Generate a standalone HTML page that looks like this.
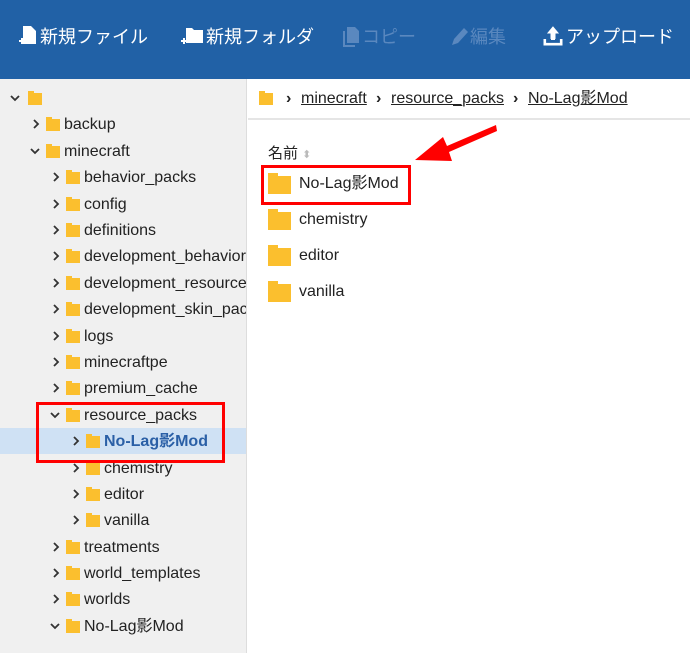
<!DOCTYPE html><html><head><meta charset="utf-8"><style>
*{margin:0;padding:0;box-sizing:border-box}
body{width:690px;height:653px;overflow:hidden;background:#fff;font-family:"Liberation Sans","Noto Sans CJK JP",sans-serif;color:#222;position:relative}
.hdr{position:absolute;left:0;top:0;width:690px;height:79px;background:#2161a6}
.hb{position:absolute;top:25px;color:#fff;font-size:18px;line-height:24px;white-space:nowrap}
.hb svg{vertical-align:-4px;margin-right:2px}
.hb.dis{color:#5a88bf}
.side{position:absolute;left:0;top:79px;width:247px;height:574px;background:#f0f0f0;border-right:1px solid #ddd;overflow:hidden}
.r{position:absolute;left:0;width:247px;height:26px;font-size:16px;line-height:27px;white-space:nowrap}
.r svg{position:absolute;top:8px}
.f{position:absolute;top:8px;width:14px;height:12px;background:#fbbf2e}
.f:before{content:"";position:absolute;left:0;top:-2px;width:6px;height:3px;background:#fbbf2e}
.r .t{position:absolute;top:0}
.crumb{position:absolute;left:248px;top:79px;width:442px;height:41px;border-bottom:2px solid #e5e5e5;font-size:16px;line-height:40px}
.crumb span{position:absolute;top:0;text-decoration:underline;color:#222}
.crumb b{position:absolute;top:0;font-weight:bold}
.li{position:absolute;left:268px;font-size:16px;line-height:20px}
.big{position:absolute;width:23px;height:18px;background:#fbbf2e;left:268px}
.big:before{content:"";position:absolute;left:0;top:-3px;width:10px;height:4px;background:#fbbf2e}
</style></head><body>
<svg width="0" height="0" style="position:absolute"><defs>
<symbol id="cr" viewBox="0 0 10 10"><path d="M3 1 L7 5 L3 9" fill="none" stroke="#333" stroke-width="1.8"/></symbol>
<symbol id="cd" viewBox="0 0 10 10"><path d="M1 3 L5 7 L9 3" fill="none" stroke="#333" stroke-width="1.8"/></symbol>
</defs></svg>
<div class="hdr">
<div class="hb" style="left:18px"><svg width="20" height="22" viewBox="0 0 20 22"><path d="M5 1h8l5 5v13H5z" fill="#fff"/><path d="M1 16h6M4 13v6" stroke="#fff" stroke-width="2"/></svg>新規ファイル</div>
<div class="hb" style="left:180px"><svg width="24" height="22" viewBox="0 0 24 22"><path d="M6 3h6l2 2h9v13H6z" fill="#fff"/><path d="M1 16h6M4 13v6" stroke="#fff" stroke-width="2"/></svg>新規フォルダ</div>
<div class="hb dis" style="left:342px"><svg width="18" height="22" viewBox="0 0 18 22"><path d="M5 2h8l4 4v12H5z" fill="#5a88bf"/><path d="M2 6v15h11" fill="none" stroke="#5a88bf" stroke-width="2"/></svg>コピー</div>
<div class="hb dis" style="left:450px"><svg width="18" height="22" viewBox="0 0 18 22"><path d="M2 20l2-6 10-11 4 4-10 11z" fill="#5a88bf"/></svg>編集</div>
<div class="hb" style="left:542px"><svg width="22" height="22" viewBox="0 0 22 22"><path d="M11 2l-5 6h3v6h4V8h3z M2 14v6h18v-6" fill="#fff" stroke="#fff" stroke-width="1"/><path d="M3 14v5h16v-5" fill="#2161a6" stroke="#fff" stroke-width="2.2"/><path d="M11 2l-5 6h3v7h4V8h3z" fill="#fff"/></svg>アップロード</div>
</div>
<div class="side">
<div class="r" style="top:6px"><svg style="left:10px" width="10" height="10"><use href="#cd"/></svg><div class="f" style="left:28px"></div></div>
<div class="r" style="top:32px"><svg style="left:31px" width="10" height="10"><use href="#cr"/></svg><div class="f" style="left:46px"></div><span class="t" style="left:64px">backup</span></div>
<div class="r" style="top:59px"><svg style="left:30px" width="10" height="10"><use href="#cd"/></svg><div class="f" style="left:46px"></div><span class="t" style="left:64px">minecraft</span></div>
<div class="r" style="top:85px"><svg style="left:51px" width="10" height="10"><use href="#cr"/></svg><div class="f" style="left:66px"></div><span class="t" style="left:84px">behavior_packs</span></div>
<div class="r" style="top:112px"><svg style="left:51px" width="10" height="10"><use href="#cr"/></svg><div class="f" style="left:66px"></div><span class="t" style="left:84px">config</span></div>
<div class="r" style="top:138px"><svg style="left:51px" width="10" height="10"><use href="#cr"/></svg><div class="f" style="left:66px"></div><span class="t" style="left:84px">definitions</span></div>
<div class="r" style="top:164px"><svg style="left:51px" width="10" height="10"><use href="#cr"/></svg><div class="f" style="left:66px"></div><span class="t" style="left:84px">development_behavior</span></div>
<div class="r" style="top:191px"><svg style="left:51px" width="10" height="10"><use href="#cr"/></svg><div class="f" style="left:66px"></div><span class="t" style="left:84px">development_resource</span></div>
<div class="r" style="top:217px"><svg style="left:51px" width="10" height="10"><use href="#cr"/></svg><div class="f" style="left:66px"></div><span class="t" style="left:84px">development_skin_pac</span></div>
<div class="r" style="top:244px"><svg style="left:51px" width="10" height="10"><use href="#cr"/></svg><div class="f" style="left:66px"></div><span class="t" style="left:84px">logs</span></div>
<div class="r" style="top:270px"><svg style="left:51px" width="10" height="10"><use href="#cr"/></svg><div class="f" style="left:66px"></div><span class="t" style="left:84px">minecraftpe</span></div>
<div class="r" style="top:296px"><svg style="left:51px" width="10" height="10"><use href="#cr"/></svg><div class="f" style="left:66px"></div><span class="t" style="left:84px">premium_cache</span></div>
<div class="r" style="top:323px"><svg style="left:50px" width="10" height="10"><use href="#cd"/></svg><div class="f" style="left:66px"></div><span class="t" style="left:84px">resource_packs</span></div>
<div class="r" style="top:349px;background:#cfe1f4"><svg style="left:71px" width="10" height="10"><use href="#cr"/></svg><div class="f" style="left:86px"></div><span class="t" style="left:104px;font-weight:bold;color:#2a5fa6">No-Lag影Mod</span></div>
<div class="r" style="top:376px"><svg style="left:71px" width="10" height="10"><use href="#cr"/></svg><div class="f" style="left:86px"></div><span class="t" style="left:104px">chemistry</span></div>
<div class="r" style="top:402px"><svg style="left:71px" width="10" height="10"><use href="#cr"/></svg><div class="f" style="left:86px"></div><span class="t" style="left:104px">editor</span></div>
<div class="r" style="top:428px"><svg style="left:71px" width="10" height="10"><use href="#cr"/></svg><div class="f" style="left:86px"></div><span class="t" style="left:104px">vanilla</span></div>
<div class="r" style="top:455px"><svg style="left:51px" width="10" height="10"><use href="#cr"/></svg><div class="f" style="left:66px"></div><span class="t" style="left:84px">treatments</span></div>
<div class="r" style="top:481px"><svg style="left:51px" width="10" height="10"><use href="#cr"/></svg><div class="f" style="left:66px"></div><span class="t" style="left:84px">world_templates</span></div>
<div class="r" style="top:507px"><svg style="left:51px" width="10" height="10"><use href="#cr"/></svg><div class="f" style="left:66px"></div><span class="t" style="left:84px">worlds</span></div>
<div class="r" style="top:534px"><svg style="left:50px" width="10" height="10"><use href="#cd"/></svg><div class="f" style="left:66px"></div><span class="t" style="left:84px">No-Lag影Mod</span></div>
<div style="position:absolute;left:36px;top:323px;width:189px;height:61px;border:3px solid #f00"></div>
</div>
<div class="crumb">
<div class="f" style="left:11px;top:14px"></div>
<b style="left:38px">›</b><span style="left:53px">minecraft</span>
<b style="left:128px">›</b><span style="left:143px">resource_packs</span>
<b style="left:265px">›</b><span style="left:280px">No-Lag影Mod</span>
</div>
<div class="li" style="top:144px;font-size:15px">名前 <span style="color:#bbb;font-size:11px">⬍</span></div>
<div class="big" style="top:176px"></div><div class="li" style="left:299px;top:174px">No-Lag影Mod</div>
<div class="big" style="top:212px"></div><div class="li" style="left:299px;top:210px">chemistry</div>
<div class="big" style="top:248px"></div><div class="li" style="left:299px;top:246px">editor</div>
<div class="big" style="top:284px"></div><div class="li" style="left:299px;top:282px">vanilla</div>
<div style="position:absolute;left:261px;top:165px;width:150px;height:40px;border:3px solid #f00"></div>
<svg style="position:absolute;left:0;top:0" width="690" height="653"><path d="M496 125 L447 146 L443 137 L415 160 L452 161 L449 152 L497 131 Z" fill="#f00"/></svg>
</body></html>
